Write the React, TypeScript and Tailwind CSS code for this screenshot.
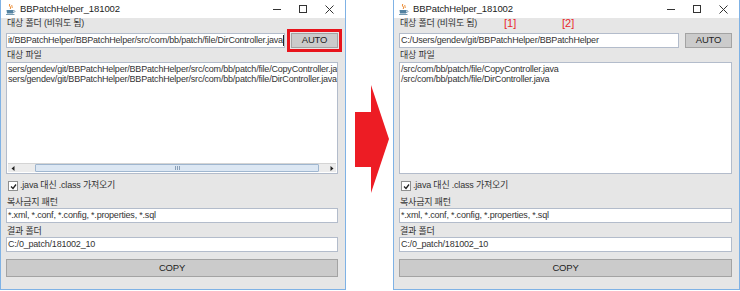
import React from "react";

const FONT = { fontFamily: '"Liberation Sans", "Noto Sans CJK KR", sans-serif' };

function JavaIcon() {
  return (
    <svg width="11" height="12" viewBox="0 0 11 12">
      <path d="M5 1 C3 3 7 4 5 6" stroke="#e76f00" strokeWidth="1" fill="none" />
      <path d="M7 2 C6 3 8 4 7 5" stroke="#e76f00" strokeWidth="0.8" fill="none" />
      <path d="M1.5 7 L8.5 7 L8 10.5 L2 10.5 Z" fill="#5382a1" />
      <path d="M8.5 7.5 C10.5 7.5 10.5 9.5 8 9.5" stroke="#5382a1" strokeWidth="0.8" fill="none" />
      <rect x="1" y="11" width="8.5" height="0.8" fill="#5382a1" />
    </svg>
  );
}

function TitleBar() {
  return (
    <div className="h-[18px] bg-white flex items-center relative">
      <div className="ml-[4px] mr-[4px] flex items-center"><JavaIcon /></div>
      <span className="text-[9.5px] tracking-[-0.1px] text-[#222]">BBPatchHelper_181002</span>
      <div className="ml-auto flex items-center h-full mr-[3px]">
        <div className="w-[26px] flex justify-center">
          <div className="w-[8px] h-[1px] bg-[#333]" />
        </div>
        <div className="w-[26px] flex justify-center">
          <div className="w-[8px] h-[8px] border border-[#333]" />
        </div>
        <div className="w-[26px] flex justify-center">
          <svg width="9" height="9" viewBox="0 0 9 9">
            <path d="M0.5 0.5 L8.5 8.5 M8.5 0.5 L0.5 8.5" stroke="#333" strokeWidth="1" />
          </svg>
        </div>
      </div>
    </div>
  );
}

function Field({ children, className = "" }: { children?: React.ReactNode; className?: string }) {
  return (
    <div
      className={
        "bg-white border border-[#b3bccb] h-[15px] flex items-center px-[1px] overflow-hidden whitespace-nowrap text-[#333] leading-none " +
        className
      }
    >
      {children}
    </div>
  );
}

function Btn({ label, className = "" }: { label: string; className?: string }) {
  return (
    <div
      className={
        "bg-[#cbcbcb] border border-[#a3a3a3] flex items-center justify-center text-[9.5px] text-[#222] " +
        className
      }
    >
      {label}
    </div>
  );
}

function Window({ variant }: { variant: "left" | "right" }) {
  const left = variant === "left";
  return (
    <div
      className={
        "h-[290px] border border-[#7fb2e5] border-t-0 bg-[#e6e6e6] flex flex-col " +
        (left ? "w-[346px]" : "w-[347px]")
      }
    >
      <TitleBar />
      <div className="flex flex-col pl-[5px] pr-[7px] text-[9px] tracking-[-0.2px] text-[#333]">
        <div className="h-[12px] flex items-center relative pl-[1px]">
          <span>대상 폴더 (비워도 됨)</span>
          {!left && (
            <>
              <span className="absolute left-[105px] top-[-3px] text-[11px] tracking-normal text-[#e8262b]">[1]</span>
              <span className="absolute left-[163px] top-[-3px] text-[11px] tracking-normal text-[#e8262b]">[2]</span>
            </>
          )}
        </div>
        <div className="h-[20px] flex items-center">
          <Field className="flex-1">
            {left ? (
              <span>
                it/BBPatchHelper/BBPatchHelper/src/com/bb/patch/file/DirController.java
                <span className="inline-block w-[1px] h-[11px] bg-[#222] align-middle" />
              </span>
            ) : (
              <span>C:/Users/gendev/git/BBPatchHelper/BBPatchHelper</span>
            )}
          </Field>
          <div className={left ? "ml-[6px] outline-[3px] outline outline-[#e8141c] outline-offset-[1px]" : "ml-[6px]"}>
            <Btn label="AUTO" className="w-[47px] h-[15px]" />
          </div>
        </div>
        <div className="h-[12px] flex items-center pl-[1px]">대상 파일</div>
        <div className="h-[112px] bg-white border border-[#b3bccb] flex flex-col">
          <div className="flex-1 overflow-hidden whitespace-nowrap leading-[10px] pt-[1px] pl-[1px] text-[#333]">
            {left ? (
              <>
                <div>sers/gendev/git/BBPatchHelper/BBPatchHelper/src/com/bb/patch/file/CopyController.java</div>
                <div>sers/gendev/git/BBPatchHelper/BBPatchHelper/src/com/bb/patch/file/DirController.java</div>
              </>
            ) : (
              <>
                <div>/src/com/bb/patch/file/CopyController.java</div>
                <div>/src/com/bb/patch/file/DirController.java</div>
              </>
            )}
          </div>
          {left && (
            <div className="h-[9px] mx-[1px] mb-[1px] bg-[#ececec] border-t border-[#d4d4d4] flex items-center">
              <div className="w-[9px] h-full flex items-center justify-center">
                <svg width="4" height="5" viewBox="0 0 4 5"><path d="M3.5 0 L0.5 2.5 L3.5 5 Z" fill="#222" /></svg>
              </div>
              <div className="w-[18px]" />
              <div className="flex-1 h-[8px] bg-[#dce7f3] border border-[#9fb6cf] rounded-[1px] flex items-center justify-center">
                <div className="flex gap-[1px]">
                  <div className="w-[1px] h-[4px] bg-[#8aa0b8]" />
                  <div className="w-[1px] h-[4px] bg-[#8aa0b8]" />
                  <div className="w-[1px] h-[4px] bg-[#8aa0b8]" />
                </div>
              </div>
              <div className="w-[8px]" />
              <div className="w-[9px] h-full flex items-center justify-center">
                <svg width="4" height="5" viewBox="0 0 4 5"><path d="M0.5 0 L3.5 2.5 L0.5 5 Z" fill="#222" /></svg>
              </div>
            </div>
          )}
        </div>
        <div className="h-[24px] flex items-center pl-[2px] gap-[2px]">
          <div className="w-[10px] h-[10px] bg-white border border-[#8e8f8f] flex items-center justify-center">
            <svg width="7" height="7" viewBox="0 0 7 7">
              <path d="M1 3.5 L3 5.5 L6 1.5" stroke="#222" strokeWidth="1.3" fill="none" />
            </svg>
          </div>
          <span>.java 대신 .class 가져오기</span>
        </div>
        <div className="h-[9px] flex items-center pl-[1px]">복사금지 패턴</div>
        <div className="h-[16px] flex items-end">
          <Field className="flex-1 h-[14px]">*.xml, *.conf, *.config, *.properties, *.sql</Field>
        </div>
        <div className="h-[15px] flex items-center pt-[2px] pl-[1px]">결과 폴더</div>
        <div className="h-[14px] flex items-end">
          <Field className="flex-1 h-[14px]">C:/0_patch/181002_10</Field>
        </div>
        <div className="h-[7px]" />
        <Btn label="COPY" className="h-[18px]" />
      </div>
    </div>
  );
}

export default function App() {
  return (
    <div className="w-[740px] h-[291px] bg-white flex overflow-hidden" style={FONT}>
      <Window variant="left" />
      <div className="w-[47px] flex items-start">
        <svg width="47" height="291" viewBox="0 0 47 291">
          <polygon points="9,112 25,112 25,85 43,139 25,193 25,167 9,167" fill="#ed1c24" />
        </svg>
      </div>
      <Window variant="right" />
    </div>
  );
}
